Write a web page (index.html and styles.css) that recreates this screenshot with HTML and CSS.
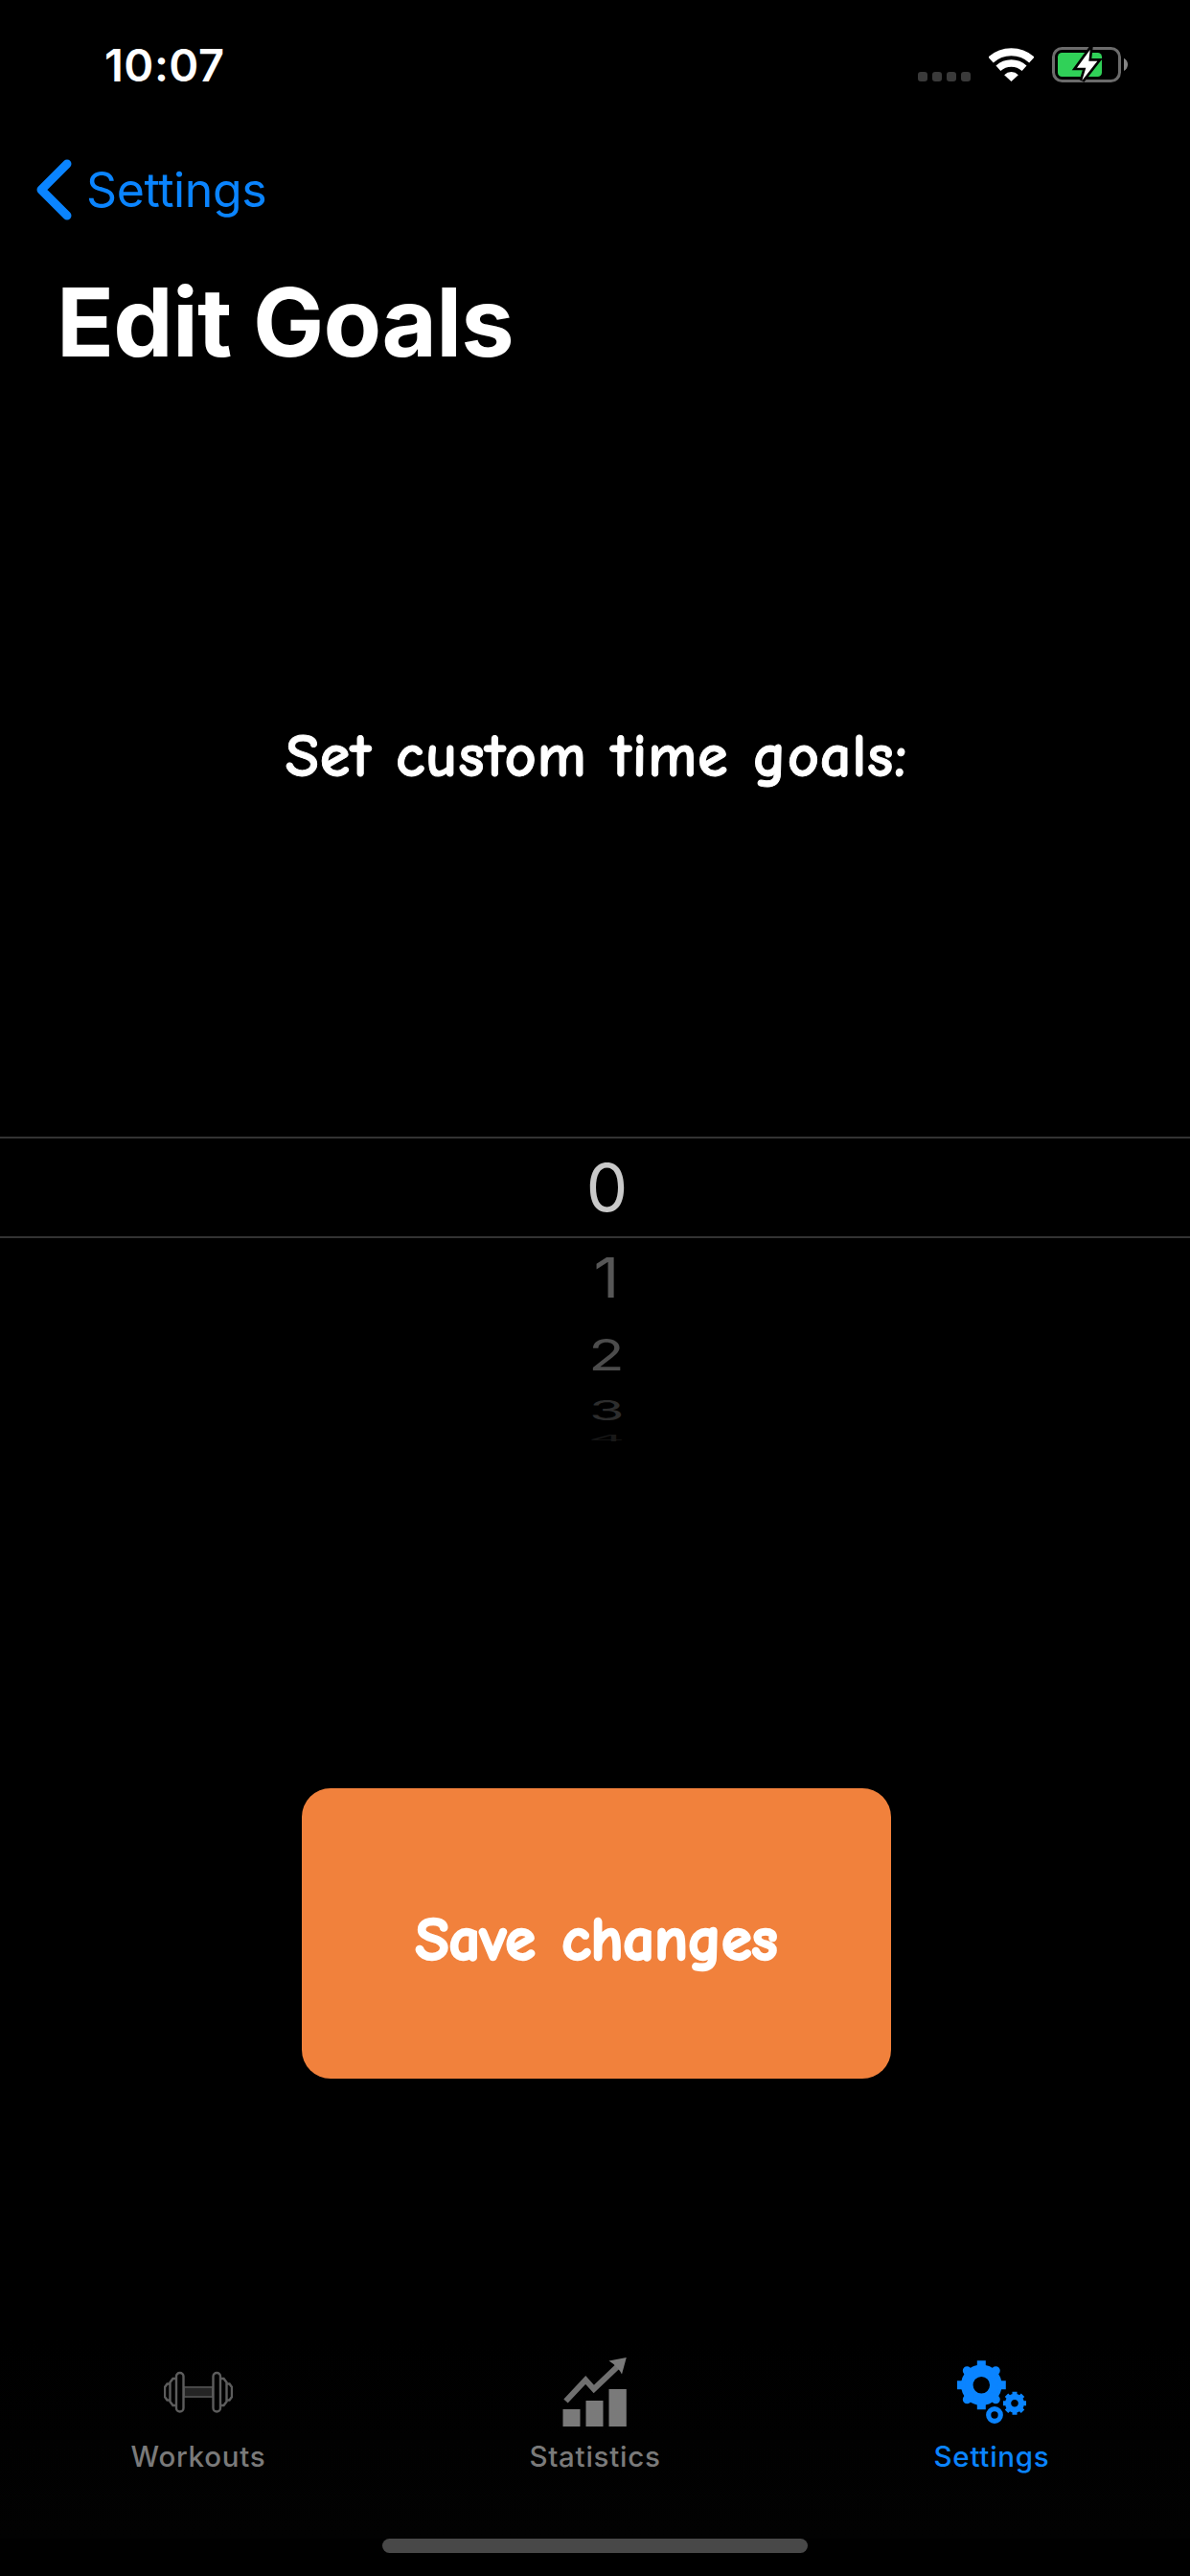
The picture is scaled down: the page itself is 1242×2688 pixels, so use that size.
FILE: index.html
```html
<!DOCTYPE html>
<html lang="en">
<head>
<meta charset="utf-8">
<title>Edit Goals</title>
<link rel="stylesheet" href="styles.css">
</head>
<body>
<div class="screen">
  <header class="status">
    <span class="time">10:07</span>
    <div class="indicators">
      <div class="signal"><i></i><i></i><i></i><i></i></div>
      <svg class="wifi" viewBox="336 87 142 108">
        <g fill="none" stroke="#fff">
          <path stroke-width="24" d="M342.3 127.7A96 96 0 0 1 470.7 127.7"/>
          <path stroke-width="22" d="M365.7 153.7A61 61 0 0 1 447.3 153.7"/>
        </g>
        <path fill="#fff" d="M406.5 195L384.5 174.5A31 31 0 0 1 428.5 174.5Z"/>
      </svg>
      <svg class="battery" viewBox="534 84 240 117">
        <rect x="538.5" y="91.5" width="207" height="102" rx="27" fill="none" stroke="#6b6b6b" stroke-width="9"/>
        <rect x="552" y="105" width="138" height="75" rx="13" fill="#30d158"/>
        <path d="M759 122Q771 128 771 142Q771 156 759 162Z" fill="#858585"/>
        <path d="M653 96L612 152H640L628 192L676 131H649Z" fill="#fff" stroke="#000" stroke-width="16"/>
        <path d="M653 96L612 152H640L628 192L676 131H649Z" fill="#fff"/>
      </svg>
    </div>
  </header>

  <nav class="back">
    <svg class="chevron" viewBox="0 0 38 64"><path d="M33 5L6 32L33 59" fill="none" stroke="#0a84ff" stroke-width="9" stroke-linecap="round" stroke-linejoin="round"/></svg>
    <span>Settings</span>
  </nav>
  <h1 class="title">Edit Goals</h1>

  <main class="content">
    <p class="prompt">Set custom time goals:</p>
    <div class="picker">
      <div class="selected"><span>0</span></div>
      <div class="row r1"><span>1</span></div>
      <div class="row r2"><span>2</span></div>
      <div class="row r3"><span>3</span></div>
      <div class="row r4"><span>4</span></div>
    </div>
    <button class="save">Save changes</button>
  </main>

  <footer class="tabs">
    <div class="tab">
      <svg class="icon" viewBox="0 0 72 72">
        <rect x="21" y="31" width="30" height="10" fill="#242424" stroke="#484848" stroke-width="2"/>
        <g fill="#000" stroke="#5c5c5c" stroke-width="2.4">
          <path d="M6 27.5H3.5L1 31V41L3.5 44.5H6M66 27.5H68.5L71 31V41L68.5 44.5H66"/>
          <path d="M12.5 22H9.5L6.5 26V46L9.5 50H12.5M59.5 22H62.5L65.5 26V46L62.5 50H59.5"/>
          <rect x="13" y="16" width="7.5" height="40.5" rx="3.7"/>
          <rect x="51.5" y="16" width="7.5" height="40.5" rx="3.7"/>
        </g>
      </svg>
      <span>Workouts</span>
    </div>
    <div class="tab">
      <svg class="icon" viewBox="0 0 72 72" fill="#7a7a7a">
        <path d="M2.5 54h18v18h-18zM26.5 45h18v27h-18zM50.5 33h18.3v39H50.5z"/>
        <path d="M5.5 45.5L26.2 23.5L34.8 33L61 8" fill="none" stroke="#707070" stroke-width="6"/>
        <path d="M68.8 0L50.5 3.5L55.5 7L62 14L64 17.5Z"/>
      </svg>
      <span>Statistics</span>
    </div>
    <div class="tab active">
      <svg class="icon" viewBox="0 0 72 72" fill="none" stroke="#0a84ff">
        <g transform="translate(25.3 28.7)">
          <circle r="15" stroke-width="12.5"/>
          <path stroke-width="9" d="M0-25.5V-17M0 25.5V17M-25.5 0H-17M25.5 0H17"/>
          <path stroke-width="9" stroke-linecap="round" d="M-15-15L-12-12M15 15L12 12M-15 15L-12 12M15-15L12-12"/>
        </g>
        <g transform="translate(60 47.7)">
          <circle r="6.9" stroke-width="6.2"/>
          <path stroke-width="5" d="M0-12V-7M0 12V7M-12 0H-7M12 0H7M-8.5-8.5L-6-6M8.5 8.5L6 6M-8.5 8.5L-6 6M8.5-8.5L6-6"/>
        </g>
        <circle cx="39" cy="60" r="6.3" stroke-width="5.2"/>
      </svg>
      <span>Settings</span>
    </div>
  </footer>
  <div class="home"></div>
</div>
</body>
</html>
```
FILE: styles.css
```css
* { box-sizing: border-box; margin: 0; padding: 0; }
body { background: #000; color: #fff; font-family: Inter, "Liberation Sans", sans-serif; }
.screen { width: 1242px; height: 2688px; display: flex; flex-direction: column; overflow: hidden; }

.status { height: 132px; padding: 0 64px 0 109px; display: flex; justify-content: space-between; }
.time { font-size: 47px; font-weight: 600; line-height: 60px; margin-top: 38px; letter-spacing: 0.5px; }
.indicators { display: flex; align-items: flex-start; padding-top: 48px; }
.signal { display: flex; gap: 5px; margin: 27px 18.5px 0 0; }
.signal i { width: 10px; height: 10px; border-radius: 3px; background: #3a3a3a; }
.wifi { width: 47.3px; height: 36px; margin: 1px 19px 0 0; }
.battery { width: 80px; height: 39px; }

.back { height: 132px; padding-left: 37px; display: flex; align-items: center; gap: 15px; color: #0a84ff; font-size: 50px; letter-spacing: -0.4px; }
.chevron { width: 38px; height: 64px; }
.title { height: 144px; padding-left: 59px; font-size: 99px; font-weight: 700; line-height: 144px; letter-spacing: -0.8px; }

.content { flex: 1; display: flex; flex-direction: column; align-items: center; }
.prompt, .save { font: 700 64.5px/80px "Chalkboard SE", "Comic Neue", "Comic Sans MS", "Noto Sans", sans-serif; color: #fff; }
.prompt { height: 778px; padding: 341px 0 0 3px; letter-spacing: 0.7px; word-spacing: 1.5px; -webkit-text-stroke: 0.9px #fff; }
.picker { width: 1242px; height: 324px; font-size: 69px; }
.selected { height: 106px; border: solid #333; border-width: 2px 0; }
.selected, .row { padding-left: 25px; display: flex; align-items: center; justify-content: center; line-height: 1; }
.selected span { color: #c9c9c9; }
.row span { display: block; }
.r1 { height: 82px; color: #575757; }
.r1 span { transform: scale(.96, .83); }
.r2 { height: 79px; color: #4c4c4c; }
.r2 span { transform: scale(.89, .66); }
.r3 { height: 37px; color: #2d2d2d; }
.r3 span { transform: scale(.86, .41); }
.r4 { height: 20px; color: #181818; }
.r4 span { transform: scale(.86, .13); }
.save { width: 615px; height: 303px; margin: 356px 0 0 3px; padding-top: 12px; border: 0; border-radius: 30px; background: #f1813c; letter-spacing: -0.2px; word-spacing: 5px; -webkit-text-stroke: 2.4px #fff; }

.tabs { height: 210px; display: grid; grid-template-columns: repeat(3, 1fr); padding-top: 21px; background: linear-gradient(#000, #020202); }
.tab { display: flex; flex-direction: column; align-items: center; color: #7a7a7a; font-size: 29.5px; font-weight: 500; line-height: 40px; letter-spacing: .75px; }
.tab.active { color: #0a84ff; }
.icon { width: 72px; height: 72px; margin-bottom: 10.5px; }
.home { width: 444px; height: 15px; margin: 0 auto 24px; border-radius: 8px; background: #484848; }
```
